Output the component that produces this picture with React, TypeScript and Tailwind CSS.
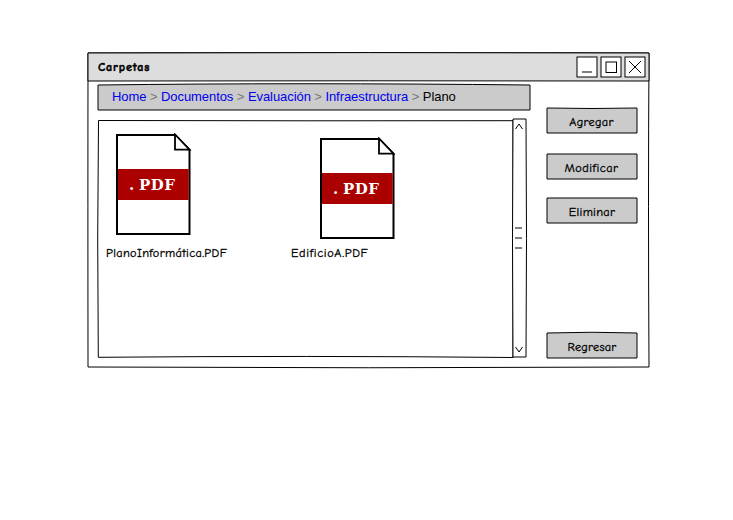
import React from "react";

const hand = "font-['Comic_Sans_MS','Comic_Neue','Noto_Sans',sans-serif]";

/* Hand-drawn outline filling its parent box. */
function Outline({ w, h, d, fill = "none" }: { w: number; h: number; d: string; fill?: string }) {
  return (
    <svg className="pointer-events-none absolute left-0 top-0 overflow-visible" width={w} height={h} viewBox={`0 0 ${w} ${h}`}>
      <path d={d} fill={fill} stroke="#000" strokeWidth="1" strokeLinejoin="round" />
    </svg>
  );
}

function SketchButton({ label, d, text }: { label: string; d: string; text: string }) {
  return (
    <button className={`relative flex h-[25px] w-[90px] items-center justify-center ${hand}`}>
      <Outline w={90} h={25} d={d} fill="#cbcbcb" />
      <span className={`relative mt-[3px] whitespace-nowrap text-[12.3px] leading-[16px] text-black [-webkit-text-stroke:0.3px_black] ${text}`}>{label}</span>
    </button>
  );
}

function WindowButton({ children }: { children: React.ReactNode }) {
  return (
    <button className="h-[22px] w-[22px]">
      <svg className="block" width="22" height="22" viewBox="0 0 22 22" fill="none" stroke="#000">
        <rect x="1" y="1" width="20" height="20" fill="#fff" />
        {children}
      </svg>
    </button>
  );
}

function PdfIcon() {
  return (
    <div className="relative h-[103px] w-[76px]">
      <svg className="absolute left-0 top-0" width="76" height="103" viewBox="0 0 76 103">
        <path d="M1 2H59L73.5 17V101H1Z" fill="#fff" stroke="#000" strokeWidth="2" />
        <path d="M59 1.5V16.7H73.5Z" fill="#fff" stroke="#000" strokeWidth="1.8" />
        <rect x="2" y="36" width="70.7" height="31" fill="#ab0000" />
      </svg>
      <span className="absolute left-[13px] top-[41px] flex font-['DejaVu_Serif',serif] text-[15px] font-bold leading-[22px] text-white">
        <span className="w-[10px]">.</span>
        <span className="tracking-[0.5px]">PDF</span>
      </span>
    </div>
  );
}

const crumbs = ["Home", "Documentos", "Evaluación", "Infraestructura"];

export default function App() {
  return (
    <div className="h-[520px] w-[733px] overflow-hidden bg-white pl-[88px] pt-[53px]">
      <main className="relative h-[314px] w-[561px]">
        <Outline w={561} h={314} d="M0 0Q280 -.8 561 0Q560 150 561 314Q280 315.5 0 314Q-.2 150 0 0Z" fill="#fff" />
        <header className="relative flex h-[28px] items-center justify-between pl-[10px] pr-[3px]">
          <Outline w={561} h={28} d="M0 0Q280 -.8 561 0V28Q280 27.6 0 28Z" fill="#dddddd" />
          <h1 className={`relative text-[12px] font-bold leading-[16px] tracking-[0.9px] [-webkit-text-stroke:0.5px_black] ${hand}`}>Carpetas</h1>
          <div className="relative flex gap-[2px]">
            <WindowButton><path d="M6 16H16" /></WindowButton>
            <WindowButton><rect x="6" y="6" width="10.5" height="10.5" /></WindowButton>
            <WindowButton><path d="M5 5L17 17M17 5L5 17" /></WindowButton>
          </div>
        </header>
        <div className="relative flex h-[286px] pl-[10px] pt-[4px]">
          <section className="w-[433px]">
            <nav className="relative flex h-[25px] items-center whitespace-pre pl-[14px] font-['Liberation_Sans',Arial,sans-serif] text-[13px] leading-[16px]">
              <Outline w={432} h={25} d="M0 0Q200 -2.5 432 0V25H0Z" fill="#cbcbcb" />
              <span className="relative -mt-[2px] tracking-[-0.07px]">
                {crumbs.map((c) => (
                  <React.Fragment key={c}>
                    <a className="text-[#0000ee]">{c}</a>
                    <span className="text-[#777]"> &gt; </span>
                  </React.Fragment>
                ))}
                <span className="text-black">Plano</span>
              </span>
            </nav>
            <div className="mt-[9px] flex h-[238px] w-[428px]">
              <div className="relative h-[238px] w-[415px] pl-[8px] pt-[14px]">
                <Outline w={415} h={238} d="M.5 1.5Q210 2 415 1.7V238.5Q210 236.5 .3 238.3Q-1 120 .5 1.5Z" fill="#fff" />
                <div className="relative flex">
                  <figure className="w-[185px]">
                    <div className="pl-[10px]"><PdfIcon /></div>
                    <figcaption className={`mt-[9px] whitespace-nowrap text-[12.3px] leading-[16px] tracking-[0.35px] [-webkit-text-stroke:0.3px_black] ${hand}`}>PlanoInformática.PDF</figcaption>
                  </figure>
                  <figure className="pt-[4px]">
                    <div className="pl-[29px]"><PdfIcon /></div>
                    <figcaption className={`mt-[5px] whitespace-nowrap text-[12.3px] leading-[16px] tracking-[0.65px] [-webkit-text-stroke:0.3px_black] ${hand}`}>EdificioA.PDF</figcaption>
                  </figure>
                </div>
              </div>
              <div className="relative w-[13px]">
                <Outline w={13} h={238} d="M0 0H13Q14 120 13 238H0Q-1 120 0 0Z" fill="#fff" />
                <svg className="relative block" width="13" height="238" viewBox="0 0 13 238" fill="none" stroke="#000">
                  <path d="M2.5 10L6 5L9.5 10M2.5 228L6 233L9.5 228" />
                  <path d="M2 109H9M2 119H9M2 129H9" />
                </svg>
              </div>
            </div>
          </section>
          <aside className="ml-[16px] flex w-[90px] flex-col pt-[23px]">
            <SketchButton label="Agregar" d="M0 0Q45 1 90 0V25H0Z" text="-ml-[1px] tracking-[0.3px]" />
            <div className="mt-[21px]"><SketchButton label="Modificar" d="M0 0H90V25H0Z" text="-ml-[1px] tracking-[0.5px]" /></div>
            <div className="mt-[19px]"><SketchButton label="Eliminar" d="M0 0H90V25H0Z" text="tracking-[0.3px]" /></div>
            <div className="mt-[110px]"><SketchButton label="Regresar" d="M0 0Q45 -1.5 90 0V25H0Z" text="tracking-[0.25px]" /></div>
          </aside>
        </div>
      </main>
    </div>
  );
}
